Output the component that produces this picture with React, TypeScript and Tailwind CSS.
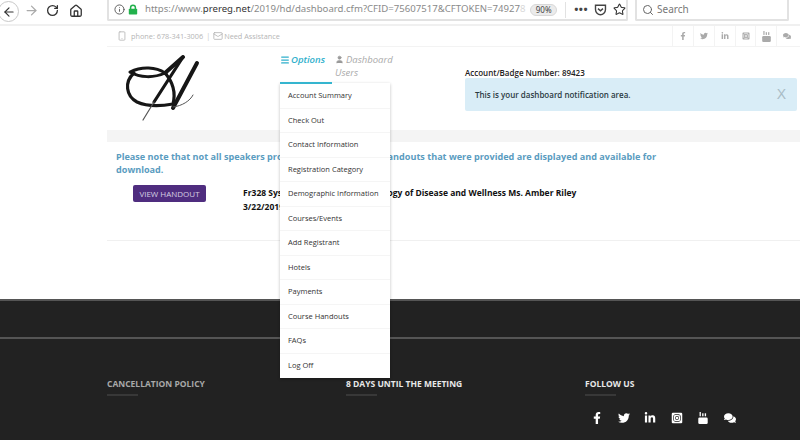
import React from 'react';
import { ArrowLeft, ArrowRight, RotateCw, Home, Info, Star, Search, Smartphone, Mail, Menu, User } from 'lucide-react';
import { FaFacebookF, FaTwitter, FaLinkedinIn, FaInstagramSquare, FaComments } from 'react-icons/fa';

const MENU_ITEMS = [
  'Account Summary',
  'Check Out',
  'Contact Information',
  'Registration Category',
  'Demographic Information',
  'Courses/Events',
  'Add Registrant',
  'Hotels',
  'Payments',
  'Course Handouts',
  'FAQs',
  'Log Off',
];

const YoutubeOld: React.FC<{ size: number }> = ({ size }) => (
  <svg width={size} height={size} viewBox="0 0 12 14" fill="currentColor">
    <rect x="2" y="0" width="1.5" height="5" />
    <rect x="5" y="1.5" width="1.6" height="3.5" />
    <rect x="8" y="1.5" width="1.6" height="3.5" />
    <rect x="0.5" y="6.5" width="11" height="7.5" rx="1.5" />
  </svg>
);

const SOCIAL = [
  <FaFacebookF />,
  <FaTwitter />,
  <FaLinkedinIn />,
  <FaInstagramSquare />,
  <YoutubeOld size={11} />,
  <FaComments />,
];

const Logo: React.FC = () => (
  <svg width="100" height="90" viewBox="0 0 100 90" fill="none" stroke="#161616" strokeLinecap="round">
    <path d="M20 32 C32 26 46 27 55 33 C44 38 30 38 20 32" strokeWidth="3" />
    <path d="M24 33 C14 42 16 56 27 62 C38 67 52 66 63 64 C66 52 62 41 55 33" strokeWidth="3.2" />
    <path d="M55 33 L73 17" strokeWidth="4" />
    <path d="M73 17 L44 62" strokeWidth="3.2" />
    <path d="M44 62 L33 80" strokeWidth="1.2" stroke="#555" />
    <path d="M87 23 L63 68" strokeWidth="4" />
    <path d="M63 67 C72 66 80 61 83 55" strokeWidth="1" stroke="#555" />
  </svg>
);

const BrowserBar: React.FC = () => (
  <div className="h-[26px] bg-white border-b-2 border-[#f0f0f0] flex items-start shrink-0 text-[#444]">
    <div className="w-[21px] h-[21px] ml-[-2px] mt-[1px] rounded-full border border-[#c8c8c8] flex items-center justify-center shrink-0">
      <ArrowLeft size={14} strokeWidth={2} className="text-[#333]" />
    </div>
    <div className="flex items-center pl-[4px] pt-[3px]">
      <ArrowRight size={15} className="text-[#aaa] ml-[1px]" />
      <RotateCw size={13} strokeWidth={2.4} className="text-[#333] ml-[7px]" />
      <Home size={14} strokeWidth={2.2} className="text-[#333] ml-[10px]" />
    </div>
    <div className="ml-[24px] w-[521px] h-[21px] border-2 border-t-0 border-[#e2e2e2] rounded-b-[2px] flex items-center pl-[5px] font-['Noto_Sans',sans-serif]">
      <Info size={11} className="text-[#555]" />
      <svg className="ml-[3px]" width="10" height="11" viewBox="0 0 10 11" fill="none">
        <path d="M2.6 5 V3.4 C2.6 0.4 7.4 0.4 7.4 3.4 V5" stroke="#22b14c" strokeWidth="1.5" />
        <rect x="0.8" y="4.8" width="8.4" height="5.8" rx="0.8" fill="#22b14c" />
      </svg>
      <div className="ml-[7px] w-[383px] overflow-hidden whitespace-nowrap text-[9.6px] text-[#8a8a8a]">
        https://www.<span className="text-[#333]">prereg.net</span>/2019/hd/dashboard.cfm?CFID=75607517&amp;CFTOKEN=74927<span className="text-[#d8d8d8]">8</span>
      </div>
      <div className="ml-[3px] w-[27px] h-[12px] rounded-full bg-[#ebebeb] border border-[#d8d8d8] flex items-center justify-center text-[8px] text-[#444]">
        90%
      </div>
      <div className="ml-[8px] w-px h-[16px] bg-[#e2e2e2]" />
      <div className="ml-[8px] text-[11px] leading-none font-bold text-[#444] tracking-[0.5px] pb-[2px]">•••</div>
      <svg className="ml-[6px]" width="13" height="12" viewBox="0 0 13 12" fill="none" stroke="#444" strokeWidth="1.4">
        <path d="M1.5 1.2 H11.5 V5.5 C11.5 8.5 9 10.8 6.5 10.8 C4 10.8 1.5 8.5 1.5 5.5 Z" />
        <path d="M4 4.6 L6.5 6.8 L9 4.6" />
      </svg>
      <Star size={13} strokeWidth={2} className="ml-[6px] text-[#333]" />
    </div>
    <div className="ml-[7px] w-[154px] h-[21px] border-2 border-t-0 border-[#e2e2e2] rounded-b-[2px] flex items-center pl-[5px] gap-[3px] font-['Noto_Sans',sans-serif]">
      <Search size={12} className="text-[#666]" />
      <span className="text-[10px] text-[#777]">Search</span>
    </div>
  </div>
);

const Dropdown: React.FC = () => (
  <div className="absolute left-0 top-[36px] w-[110px] h-[295px] pt-[1px] bg-white shadow-[0_1px_3px_rgba(0,0,0,0.25)] z-10">
    <div className="absolute left-0 top-[-1px] w-[52px] h-[2px] bg-[#35b5cf]" />
    {MENU_ITEMS.map((item) => (
      <div key={item} className="h-[24.5px] flex items-center pl-[8px] border-b border-[#f5f5f5] last:border-b-0 text-[7.5px] text-[#333] whitespace-nowrap">
        {item}
      </div>
    ))}
  </div>
);

export default function App() {
  return (
    <div className="w-[800px] h-[440px] overflow-hidden flex flex-col bg-white font-['Open_Sans',sans-serif]">
      <BrowserBar />

      <div className="ml-[107px] flex-1 flex flex-col">
        <div className="h-[21px] border-b border-[#f3f3f3] flex items-center justify-between text-[7.3px] text-[#b5b5b5] shrink-0">
          <div className="flex items-center pl-[10px]">
            <Smartphone size={10} className="mr-[4px]" />
            <span>phone: 678-341-3006</span>
            <span className="mx-[3px] text-[#ccc]">|</span>
            <Mail size={10} className="mr-[1px]" />
            <span>Need Assistance</span>
          </div>
          <div className="flex h-full pr-[3px]">
            {SOCIAL.map((icon, i) => (
              <div key={i} className="w-[20.8px] h-full border-l border-[#f3f3f3] flex items-center justify-center text-[8px] text-[#aaa]">
                {icon}
              </div>
            ))}
          </div>
        </div>

        <div className="h-[83px] flex shrink-0">
          <div className="w-[173px] pl-[3px] shrink-0 -mt-[7px]">
            <Logo />
          </div>
          <div className="relative w-[185px] shrink-0 pt-[6px]">
            <div className="flex text-[9.5px] italic leading-[13px]">
              <div className="flex items-start w-[55px] font-semibold text-[#2fb0cc]">
                <Menu size={10} strokeWidth={3} className="mr-[1px] mt-[2px]" />
                <span>Options</span>
              </div>
              <div className="w-[62px] text-[#aaa]">
                <User size={9} fill="#999" className="inline text-[#999] mr-[2px] align-[-1px]" />
                Dashboard Users
              </div>
            </div>
            <Dropdown />
          </div>
          <div className="flex-1 pt-[20px] pr-[3px]">
            <div className="text-[8px] font-semibold text-[#222] h-[11px] leading-[12px]">Account/Badge Number: 89423</div>
            <div className="h-[33px] bg-[#d9edf7] rounded-[2px] flex items-center justify-between pl-[10px] pr-[11px]">
              <span className="text-[8px] font-semibold text-[#2b3a42]">This is your dashboard notification area.</span>
              <span className="text-[14px] text-[#a9bcc6] font-['Liberation_Sans',sans-serif]">X</span>
            </div>
          </div>
        </div>

        <div className="h-[12px] bg-[#f4f4f4] shrink-0" />

        <div className="pl-[9px] pt-[8px] shrink-0">
          <p className="w-[560px] text-[9.1px] leading-[13px] font-bold text-[#5a9cbf]">
            Please note that not all speakers provided handouts. Only handouts that were provided are displayed and available for download.
          </p>
          <div className="flex pt-[9px]">
            <div className="w-[127px] pl-[17px] shrink-0">
              <div className="w-[73px] h-[17px] rounded-[2px] bg-[#4f2d7f] flex items-center justify-center text-[8px] text-[#d5cde2]">
                VIEW HANDOUT
              </div>
            </div>
            <div className="text-[8.5px] leading-[14px] font-bold text-[#111] pt-[1px]">
              <div>Fr328 Systems Biology and Physiology of Disease and Wellness Ms. Amber Riley</div>
              <div>3/22/2019</div>
            </div>
          </div>
        </div>

        <div className="mt-[26px] border-t border-[#f0f0f0] shrink-0" />
      </div>

      <div className="h-[141px] bg-[#222222] border-t-2 border-[#555] shrink-0">
        <div className="h-[38px] border-b-2 border-[#555]" />
        <div className="flex pl-[107px] pt-[39px] text-[8.5px] font-bold">
          <div className="w-[239px]">
            <div className="text-[#a9a9a9]">CANCELLATION POLICY</div>
            <div className="w-[31px] h-[2px] bg-[#383838] mt-[3px]" />
          </div>
          <div className="w-[239px]">
            <div className="text-[#e8e8e8]">8 DAYS UNTIL THE MEETING</div>
            <div className="w-[31px] h-[2px] bg-[#383838] mt-[3px]" />
          </div>
          <div>
            <div className="text-[#e8e8e8]">FOLLOW US</div>
            <div className="w-[31px] h-[2px] bg-[#383838] mt-[3px]" />
            <div className="flex items-center gap-[14.5px] pl-[6px] pt-[16px] text-[12px] text-white">
              {SOCIAL.slice(0, 4).map((icon, i) => (
                <span key={i}>{icon}</span>
              ))}
              <YoutubeOld size={12} />
              <FaComments />
            </div>
          </div>
        </div>
      </div>
    </div>
  );
}
